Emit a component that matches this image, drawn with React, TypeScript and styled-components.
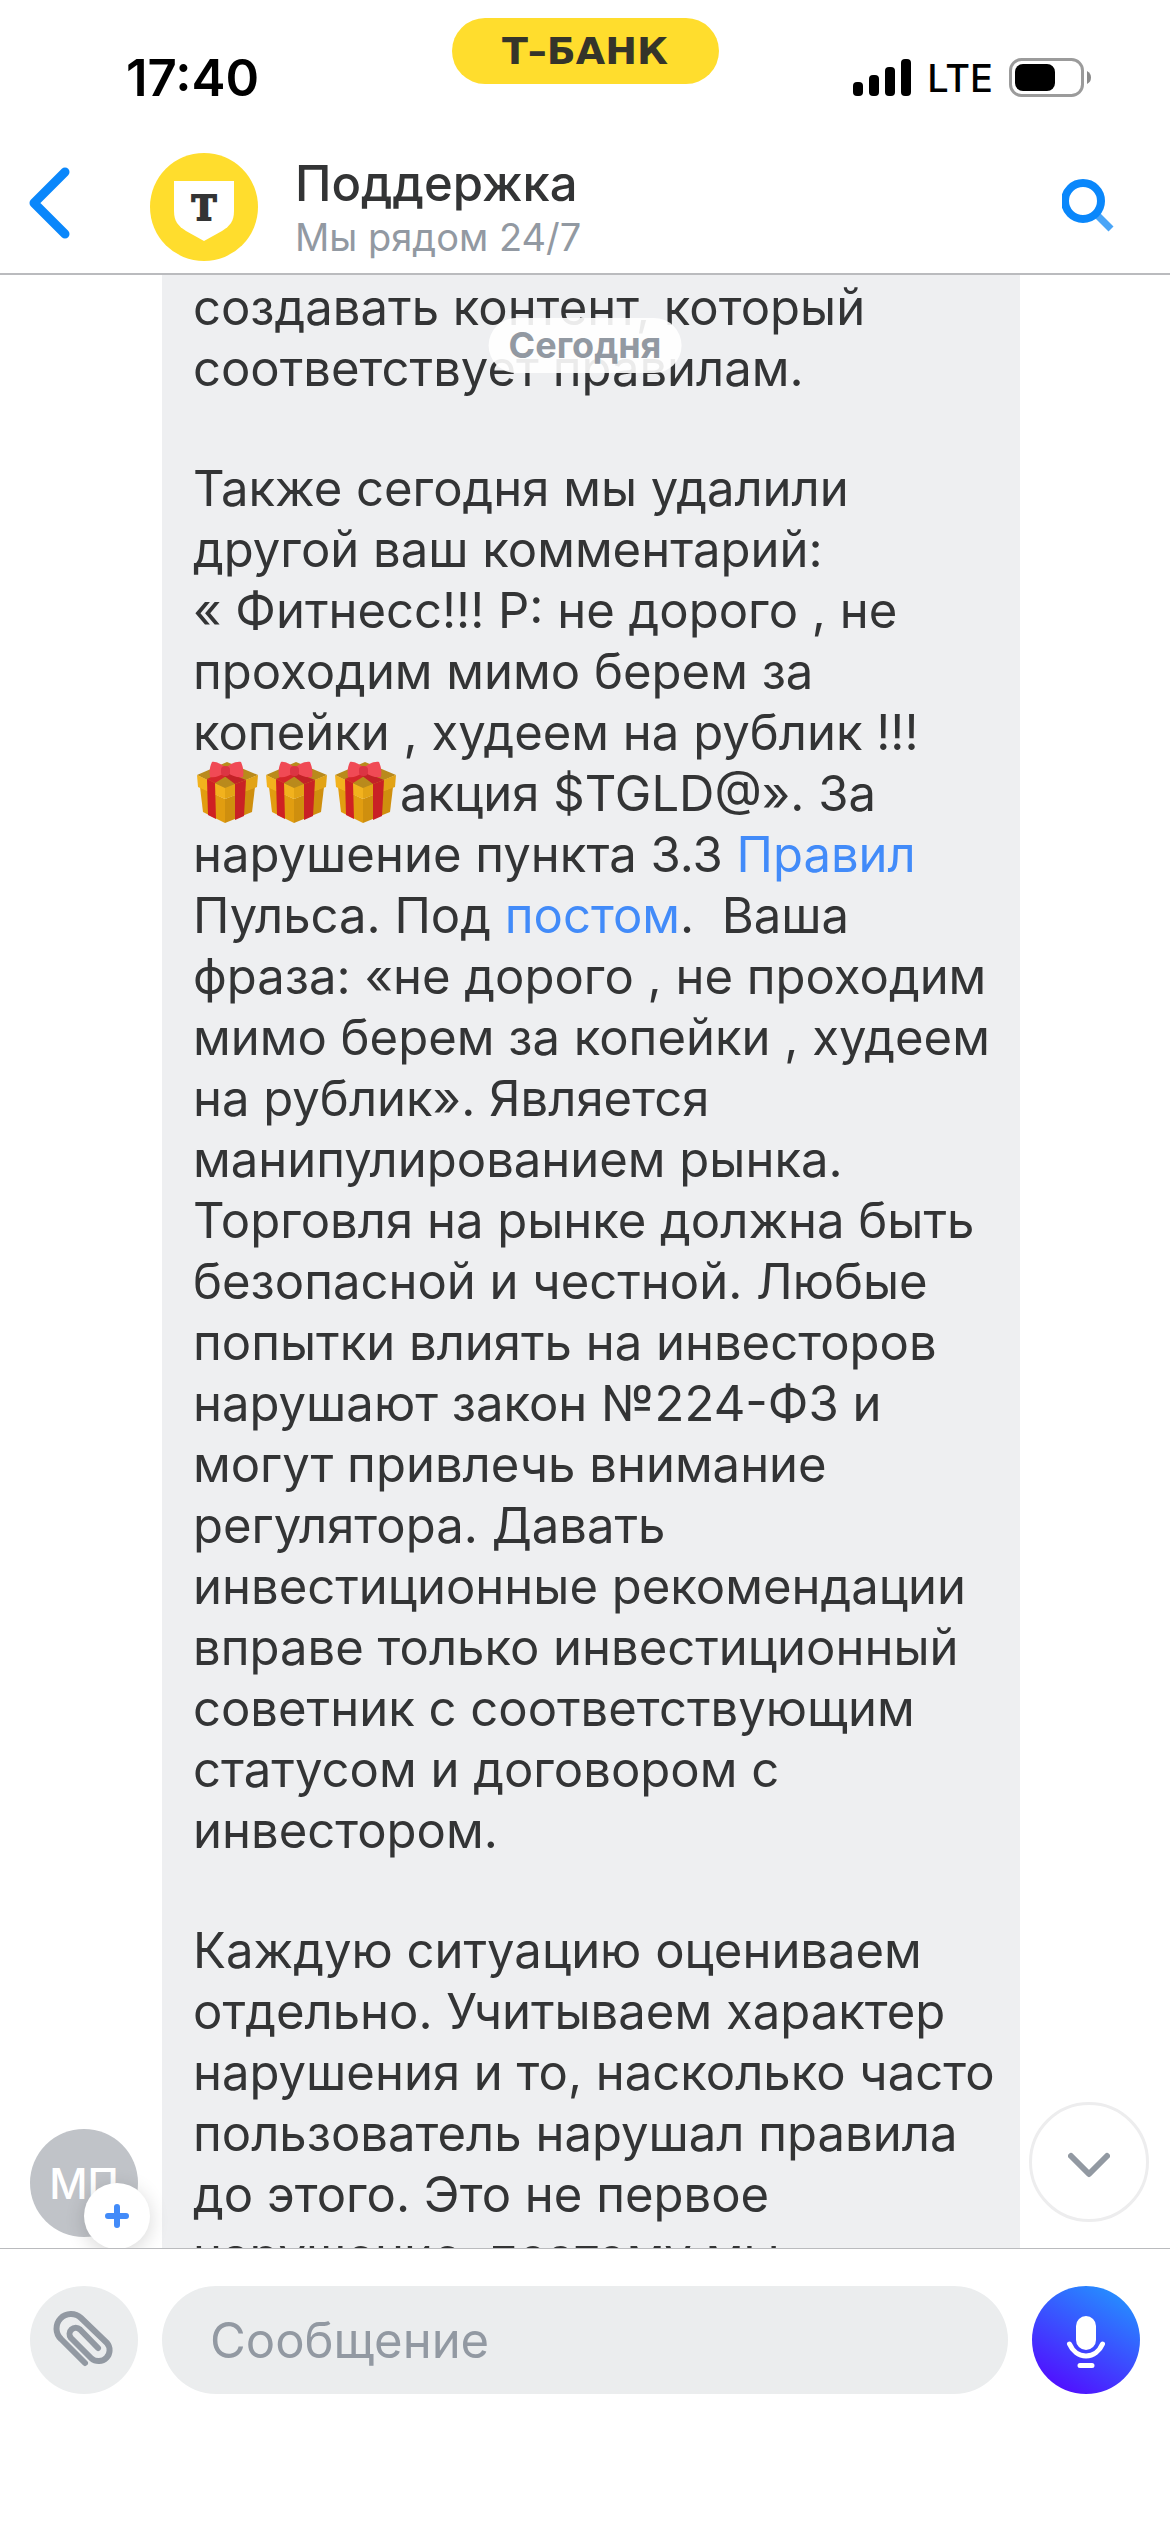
import React from "react";
import styled, { createGlobalStyle } from "styled-components";

const color = {
  text: "#333435",
  muted: "#9299a2",
  link: "#428bf9",
  action: "#0a87fb",
  bubble: "#eeeff1",
  field: "#ebedee",
  brand: "#ffdd2d",
  line: "#babbbe",
};

const GlobalStyle = createGlobalStyle`
  * { box-sizing: border-box; }
  body {
    margin: 0;
    background: #fff;
    color: ${color.text};
    font-family: Inter, "Noto Sans", sans-serif;
  }
  button, input { font: inherit; border: 0; padding: 0; }
  svg { display: block; }
`;

const Screen = styled.div`
  display: flex;
  flex-direction: column;
  height: 100vh;
  background: #fff;
`;

const StatusBar = styled.div`
  display: grid;
  grid-template-columns: 1fr auto 1fr;
  height: 132px;
  padding: 18px 78px 0 126px;
  color: #000;
`;

const Clock = styled.time`
  padding-top: 30px;
  font-size: 51px;
  line-height: 60px;
  font-weight: 600;
`;

const BrandPill = styled.div`
  display: flex;
  align-items: center;
  justify-content: center;
  width: 267px;
  height: 66px;
  margin-right: 48px;
  border-radius: 33px;
  background: ${color.brand};
  color: #35342a;
  font: 700 38px/40px "DejaVu Sans", sans-serif;
`;

const Indicators = styled.div`
  display: flex;
  justify-content: flex-end;
  align-items: center;
  height: 60px;
  margin-top: 30px;
  gap: 16px;
  font-size: 38px;
  font-weight: 500;
`;

const NavBar = styled.header`
  display: flex;
  align-items: center;
  height: 143px;
  padding: 8px 48px 0 22px;
  border-bottom: 2px solid ${color.line};
`;

const IconButton = styled.button`
  display: flex;
  align-items: center;
  justify-content: center;
  flex: none;
  width: 60px;
  height: 90px;
  padding-bottom: 8px;
  background: none;
  color: ${color.action};
`;

const BankAvatar = styled.div`
  flex: none;
  width: 108px;
  height: 108px;
  margin-left: 68px;
`;

const Titles = styled.div`
  flex: 1;
  padding-left: 37px;
`;

const Title = styled.h1`
  margin: 0;
  font-size: 49px;
  line-height: 60px;
  font-weight: 500;
`;

const Subtitle = styled.p`
  margin: 0;
  font-size: 38px;
  line-height: 46px;
  color: ${color.muted};
`;

const Chat = styled.main`
  position: relative;
  flex: 1;
  min-height: 0;
  overflow: hidden;
  padding: 0 150px 0 162px;
`;

const Bubble = styled.article`
  display: flex;
  flex-direction: column;
  gap: 59px;
  padding: 2px 31px 40px;
  background: ${color.bubble};
`;

const Paragraph = styled.p`
  margin: 0;
  font-size: 49px;
  line-height: 61px;
  white-space: pre;
`;

const Link = styled.a`
  color: ${color.link};
  text-decoration: none;
`;

const GiftIcon = styled.svg`
  display: inline-block;
  width: 61px;
  height: 62px;
  margin: -8px 4px;
  vertical-align: -4px;
`;

const DateChip = styled.div`
  position: absolute;
  top: 43px;
  left: 50%;
  transform: translateX(-50%);
  height: 55px;
  padding: 0 20px;
  border-radius: 28px;
  background: rgba(255, 255, 255, 0.9);
  color: ${color.muted};
  font-size: 36px;
  line-height: 55px;
  font-weight: 700;
`;

const Agent = styled.button`
  position: absolute;
  left: 30px;
  bottom: 11px;
  width: 108px;
  height: 108px;
  border-radius: 50%;
  background: #c0c3c8;
  color: #fff;
  font-size: 42px;
  font-weight: 500;
`;

const AgentBadge = styled.span`
  position: absolute;
  left: 54px;
  top: 54px;
  display: flex;
  align-items: center;
  justify-content: center;
  width: 66px;
  height: 66px;
  border-radius: 50%;
  background: #fff;
  color: ${color.link};
  box-shadow: 0 4px 20px rgba(0, 0, 0, 0.16);
`;

const ScrollDown = styled.button`
  position: absolute;
  right: 21px;
  bottom: 26px;
  display: flex;
  align-items: center;
  justify-content: center;
  width: 120px;
  height: 120px;
  border: 3px solid #ededee;
  border-radius: 50%;
  background: #fff;
  color: ${color.muted};
`;

const Composer = styled.form`
  display: flex;
  align-items: flex-start;
  gap: 24px;
  height: 284px;
  padding: 37px 30px 0;
  border-top: 1px solid ${color.line};
`;

const RoundButton = styled.button<{ $fill: string; $ink: string }>`
  flex: none;
  width: 108px;
  height: 108px;
  border-radius: 50%;
  background: ${(p) => p.$fill};
  color: ${(p) => p.$ink};
`;

const MessageInput = styled.input`
  flex: 1;
  min-width: 0;
  height: 108px;
  padding: 0 48px;
  border-radius: 54px;
  outline: none;
  background: ${color.field};
  color: ${color.text};
  font-size: 49px;
  &::placeholder { color: ${color.muted}; opacity: 1; }
`;

const Gift = () => (
  <GiftIcon viewBox="0 0 61 62" role="img" aria-label="Подарок">
    <path d="M3 26 28 38v24L6 51Z" fill="#e19d10" />
    <path d="M28 38 58 26 55 51 28 62Z" fill="#cf8f0e" />
    <path d="M0 14 30 1 61 14 28 28Z" fill="#b98a1c" />
    <path d="M0 14 28 27v11L1 26Z" fill="#f2b21d" />
    <path d="M28 27 61 14l-1 12L28 38Z" fill="#e2a315" />
    <path d="m10 18 8 4 1 36-8-4Z" fill="#cf2023" />
    <path d="m38 23 11-4-2 36-9 4Z" fill="#c92125" />
    <path d="m10 18 15-7 6 3-13 8Z" fill="#d5262b" />
    <path d="m26 14 6-2 17 7-11 4Z" fill="#c32227" />
    <path d="M28 6C23 2 17 0 15 1c-2 4-3 9-2 15 5 1 10-1 14-4h4c4 3 10 5 15 4 1-5 0-11-2-15-3-1-10 1-14 5Z" fill="#f04a55" />
    <rect x="24" y="5" width="9" height="10" rx="4" fill="#dc3443" />
  </GiftIcon>
);

export default function App() {
  return (
    <Screen>
      <GlobalStyle />
      <StatusBar>
        <Clock>17:40</Clock>
        <BrandPill>Т–БАНК</BrandPill>
        <Indicators>
          <svg width="58" height="38" viewBox="0 0 58 38" fill="#000">
            <rect y="23" width="10" height="14" rx="4" />
            <rect x="16" y="16" width="10" height="21" rx="4" />
            <rect x="32" y="8" width="10" height="29" rx="4" />
            <rect x="48" width="10" height="37" rx="4" />
          </svg>
          <span>LTE</span>
          <svg width="83" height="40" viewBox="0 0 83 40">
            <rect x="1.5" y="1.5" width="72" height="36" rx="11" fill="none" stroke="#9b9b9b" strokeWidth="3" />
            <rect x="6" y="6" width="40" height="27" rx="8" fill="#000" />
            <path d="M78 13q4 2 4 6.500t-4 6.500Z" fill="#8a8a8a" />
          </svg>
        </Indicators>
      </StatusBar>

      <NavBar>
        <IconButton aria-label="Назад">
          <svg width="60" height="80" viewBox="0 0 60 80" fill="none" stroke="currentColor" strokeWidth="9" strokeLinecap="round" strokeLinejoin="round">
            <path d="M43 9 12 40l31 31" />
          </svg>
        </IconButton>
        <BankAvatar>
          <svg width="108" height="108" viewBox="0 0 108 108">
            <circle cx="54" cy="54" r="54" fill={color.brand} />
            <path d="M24 28h60v30c0 10-4 15-12 20L54 88 36 78c-8-5-12-10-12-20Z" fill="#fff" />
            <text x="54" y="67" textAnchor="middle" fontFamily="DejaVu Serif" fontWeight="700" fontSize="33" fill={color.text} stroke={color.text} strokeWidth="2">Т</text>
          </svg>
        </BankAvatar>
        <Titles>
          <Title>Поддержка</Title>
          <Subtitle>Мы рядом 24/7</Subtitle>
        </Titles>
        <IconButton aria-label="Поиск">
          <svg width="60" height="60" viewBox="0 0 60 60" fill="none" stroke="currentColor">
            <path d="m33 40 16 16" strokeWidth="7" stroke="#4aa5f7" />
            <circle cx="21" cy="28" r="18" strokeWidth="8" />
          </svg>
        </IconButton>
      </NavBar>

      <Chat>
        <Bubble>
          <Paragraph>{"создавать контент, который\nсоответствует правилам."}</Paragraph>
          <Paragraph>
            {"Также сегодня мы удалили\nдругой ваш комментарий:\n« Фитнесс!!! Р: не дорого , не\nпроходим мимо берем за\nкопейки , худеем на рублик !!!\n"}
            <Gift />
            <Gift />
            <Gift />
            {"акция $TGLD@». За\nнарушение пункта 3.3 "}
            <Link href="#rules">Правил</Link>
            {"\nПульса. Под "}
            <Link href="#post">постом</Link>
            {".  Ваша\nфраза: «не дорого , не проходим\nмимо берем за копейки , худеем\nна рублик». Является\nманипулированием рынка.\nТорговля на рынке должна быть\nбезопасной и честной. Любые\nпопытки влиять на инвесторов\nнарушают закон №224-ФЗ и\nмогут привлечь внимание\nрегулятора. Давать\nинвестиционные рекомендации\nвправе только инвестиционный\nсоветник с соответствующим\nстатусом и договором с\nинвестором."}
          </Paragraph>
          <Paragraph>
            {"Каждую ситуацию оцениваем\nотдельно. Учитываем характер\nнарушения и то, насколько часто\nпользователь нарушал правила\nдо этого. Это не первое\nнарушение, поэтому мы"}
          </Paragraph>
        </Bubble>
        <DateChip>Сегодня</DateChip>
        <Agent aria-label="МП">
          МП
          <AgentBadge>
            <svg width="24" height="24" viewBox="0 0 24 24" stroke="currentColor" strokeWidth="6" strokeLinecap="round">
              <path d="M12 3v18M3 12h18" />
            </svg>
          </AgentBadge>
        </Agent>
        <ScrollDown aria-label="Вниз">
          <svg width="42" height="42" viewBox="0 0 42 42" fill="none" stroke="currentColor" strokeWidth="6" strokeLinecap="round" strokeLinejoin="round">
            <path d="m3 15 18 18 18-18" />
          </svg>
        </ScrollDown>
      </Chat>

      <Composer>
        <RoundButton type="button" aria-label="Прикрепить файл" $fill={color.field} $ink={color.muted}>
          <svg width="108" height="108" viewBox="0 0 108 108" fill="none" stroke="currentColor" strokeWidth="6" strokeLinecap="round" strokeLinejoin="round">
            <path d="M55 77 31 53A14.500 14.500 0 0 1 51 32L77 57A11 11 0 0 1 61.500 72.500L41 52A6.200 6.200 0 0 1 50 43.500L68 62" />
          </svg>
        </RoundButton>
        <MessageInput aria-label="Сообщение" placeholder="Сообщение" />
        <RoundButton type="button" aria-label="Голосовое сообщение" $fill="linear-gradient(30deg, #5010ff 12%, #2492ff 92%)" $ink="#fff">
          <svg width="108" height="108" viewBox="0 0 108 108" fill="none" stroke="currentColor" strokeWidth="5" strokeLinecap="round">
            <rect x="44" y="30" width="20" height="34" rx="10" fill="currentColor" stroke="none" />
            <path d="M37.500 58c3 7 9 12 16.500 12s13.500-5 16.500-12M48 79.500h12" />
          </svg>
        </RoundButton>
      </Composer>
    </Screen>
  );
}
